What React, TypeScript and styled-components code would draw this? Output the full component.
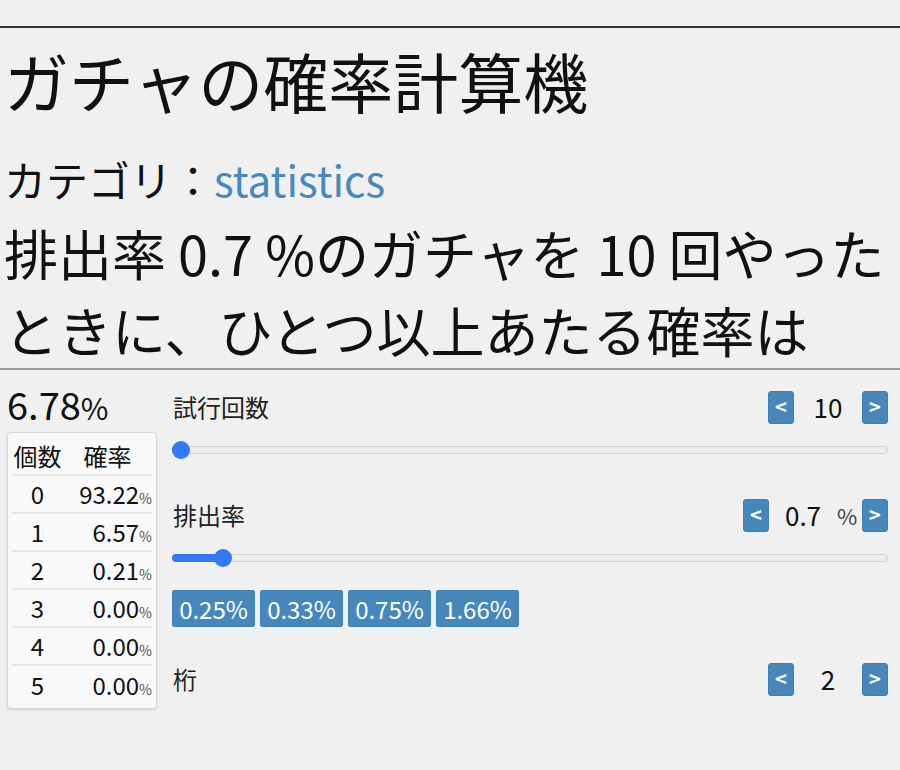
import React from "react";
import styled, { createGlobalStyle } from "styled-components";

const GlobalStyle = createGlobalStyle`
  html, body {
    margin: 0;
    padding: 0;
    background: #f0f0f0;
  }
  body {
    font-family: "Noto Sans CJK JP", "Noto Sans", sans-serif;
    font-weight: 400;
    color: #111;
  }
  * { box-sizing: border-box; }
`;

const BLUE = "#4688bc";
const SLIDER_BLUE = "#3478f6";

const Page = styled.div`
  width: 900px;
  min-height: 770px;
  padding-top: 26px;
`;

const TopRule = styled.div`
  height: 2px;
  background: #333;
`;

const Header = styled.header`
  padding: 0 4px;
`;

const Title = styled.h1`
  margin: 13px 0 0;
  font-size: 65px;
  line-height: 78px;
  font-weight: 400;
  white-space: nowrap;
`;

const Category = styled.div`
  margin-top: 35px;
  font-size: 42px;
  line-height: 49px;
`;

const CategoryLink = styled.a`
  color: #4689bf;
  text-decoration: none;
`;

const Question = styled.p`
  margin: 12px 0 0;
  font-size: 54px;
  line-height: 76.5px;
`;

const SectionRule = styled.div`
  height: 2px;
  background: #999;
`;

const Body = styled.div`
  display: flex;
  align-items: flex-start;
  gap: 15px;
  padding: 0 12px 0 7px;
`;

const LeftCol = styled.div`
  width: 150px;
  flex: none;
`;

const Total = styled.div`
  margin-top: 11px;
  font-size: 38px;
  line-height: 46px;
  height: 46px;
  white-space: nowrap;
`;

const TotalUnit = styled.span`
  font-size: 30px;
  line-height: 1;
`;

const TableBox = styled.div`
  margin-top: 5px;
  border: 1px solid #d6d6d6;
  border-radius: 4px;
  background: #f9f9f9;
  box-shadow: 0 1px 2px rgba(0, 0, 0, 0.12);
  padding: 5px 4px 4px;
`;

const Row = styled.div<{ $last?: boolean }>`
  display: grid;
  grid-template-columns: 51px 1fr;
  align-items: center;
  height: 38px;
  border-bottom: ${(p) => (p.$last ? "none" : "2px solid #e6e6e6")};
  font-size: 24px;
  line-height: 36px;
`;

const HeadCell = styled.div`
  text-align: center;
  white-space: nowrap;
`;

const CountCell = styled.div`
  text-align: center;
`;

const ValueCell = styled.div`
  text-align: right;
  white-space: nowrap;
`;

const SmallPct = styled.span`
  font-size: 14px;
  line-height: 1;
  color: #555;
`;

const RightCol = styled.div`
  flex: 1;
  padding-top: 20px;
  display: flex;
  flex-direction: column;
  gap: 35px;
`;

const Setting = styled.div`
  display: flex;
  flex-direction: column;
`;

const SettingHead = styled.div`
  display: flex;
  align-items: center;
  justify-content: space-between;
  height: 34px;
`;

const Label = styled.div`
  font-size: 24px;
  line-height: 34px;
  color: #222;
  padding-left: 1px;
`;

const Stepper = styled.div`
  display: flex;
  align-items: center;
`;

const StepButton = styled.button`
  width: 26px;
  height: 33px;
  padding: 0;
  border: 1px solid #3f7fb2;
  border-radius: 3px;
  background: ${BLUE};
  color: #fff;
  font-family: "Noto Sans CJK JP", "Noto Sans", sans-serif;
  font-size: 20px;
  font-weight: 700;
  line-height: 1;
  display: flex;
  align-items: center;
  justify-content: center;
`;

const StepValue = styled.div`
  width: 68px;
  text-align: center;
  font-size: 26px;
  line-height: 34px;
  color: #111;
`;

const StepUnit = styled.div`
  width: 25px;
  font-size: 22px;
  line-height: 34px;
  color: #444;
`;

const SliderWrap = styled.div`
  position: relative;
  margin: 17px 0 4px;
  height: 18px;
  display: flex;
  align-items: center;
`;

const Track = styled.div`
  position: relative;
  width: 100%;
  height: 8px;
  border: 1px solid #d2d2d2;
  border-radius: 4px;
  background: #ececec;
`;

const Fill = styled.div`
  position: absolute;
  left: -1px;
  top: -1px;
  height: 8px;
  border-radius: 4px;
  background: ${SLIDER_BLUE};
`;

const Thumb = styled.div`
  position: absolute;
  top: 0;
  width: 18px;
  height: 18px;
  border-radius: 50%;
  background: ${SLIDER_BLUE};
`;

const Presets = styled.div`
  display: flex;
  gap: 5px;
  margin-top: 19px;
`;

const PresetButton = styled.button`
  width: 83px;
  height: 37px;
  padding: 0;
  border: 1px solid #4183b7;
  border-radius: 2px;
  background: ${BLUE};
  color: #fff;
  font-family: "Noto Sans CJK JP", "Noto Sans", sans-serif;
  font-size: 24px;
  line-height: 1;
`;

type SliderProps = { value: number; min: number; max: number };

const Slider: React.FC<SliderProps> = ({ value, min, max }) => {
  const frac = (value - min) / (max - min);
  const center = `calc(9px + (100% - 18px) * ${frac})`;
  return (
    <SliderWrap>
      <Track>
        <Fill style={{ width: `calc(${center} + 1px)` }} />
      </Track>
      <Thumb style={{ left: `calc(${center} - 9px)` }} />
    </SliderWrap>
  );
};

type StepProps = { label: string; value: string; unit?: string };

const SettingHeader: React.FC<StepProps> = ({ label, value, unit }) => (
  <SettingHead>
    <Label>{label}</Label>
    <Stepper>
      <StepButton>&lt;</StepButton>
      <StepValue>{value}</StepValue>
      {unit && <StepUnit>{unit}</StepUnit>}
      <StepButton>&gt;</StepButton>
    </Stepper>
  </SettingHead>
);

const trials = 10;
const rate = 0.7;

function binom(n: number, k: number) {
  let r = 1;
  for (let i = 1; i <= k; i++) r = (r * (n - k + i)) / i;
  return r;
}

const rows = [0, 1, 2, 3, 4, 5].map((k) => {
  const p = rate / 100;
  const v = binom(trials, k) * Math.pow(p, k) * Math.pow(1 - p, trials - k) * 100;
  return { k, v: v.toFixed(2) };
});

const atLeastOne = ((1 - Math.pow(1 - rate / 100, trials)) * 100).toFixed(2);

const questionText = `排出率 ${rate} %のガチャを ${trials} 回やったときに、ひとつ以上あたる確率は`;

export default function App() {
  return (
    <Page>
      <GlobalStyle />
      <TopRule />
      <Header>
        <Title>ガチャの確率計算機</Title>
        <Category>
          カテゴリ：<CategoryLink href="#">statistics</CategoryLink>
        </Category>
        <Question>{questionText}</Question>
      </Header>
      <SectionRule />
      <Body>
        <LeftCol>
          <Total>
            {atLeastOne}
            <TotalUnit>%</TotalUnit>
          </Total>
          <TableBox>
            <Row>
              <HeadCell>個数</HeadCell>
              <HeadCell>確率</HeadCell>
            </Row>
            {rows.map((r, i) => (
              <Row key={r.k} $last={i === rows.length - 1}>
                <CountCell>{r.k}</CountCell>
                <ValueCell>
                  {r.v}
                  <SmallPct>%</SmallPct>
                </ValueCell>
              </Row>
            ))}
          </TableBox>
        </LeftCol>
        <RightCol>
          <Setting>
            <SettingHeader label="試行回数" value={String(trials)} />
            <Slider value={trials} min={10} max={1000} />
          </Setting>
          <Setting>
            <SettingHeader label="排出率" value={String(rate)} unit="%" />
            <Slider value={rate} min={0.1} max={10} />
            <Presets>
              {["0.25%", "0.33%", "0.75%", "1.66%"].map((t) => (
                <PresetButton key={t}>{t}</PresetButton>
              ))}
            </Presets>
          </Setting>
          <Setting>
            <SettingHeader label="桁" value="2" />
          </Setting>
        </RightCol>
      </Body>
    </Page>
  );
}
